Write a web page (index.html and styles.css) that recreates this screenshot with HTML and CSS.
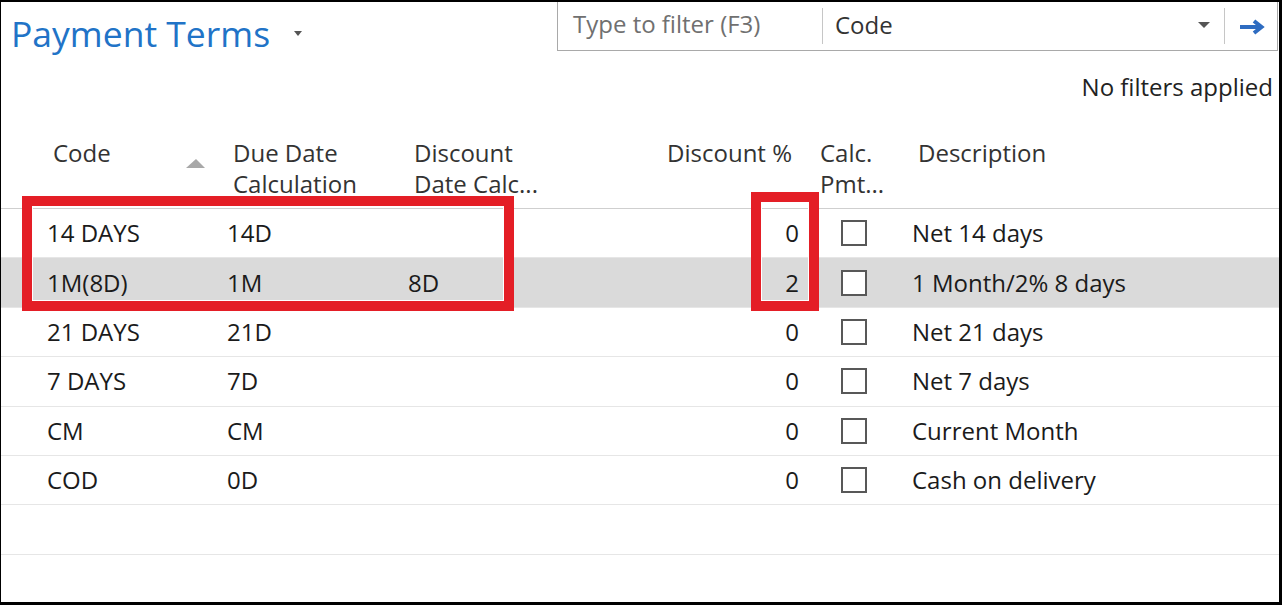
FILE: index.html
```html
<!DOCTYPE html>
<html lang="en">
<head>
    <meta charset="UTF-8">
    <meta name="viewport" content="width=device-width, initial-scale=1.0">
    <title>Payment Terms</title>
    <link rel="stylesheet" href="styles.css">
</head>
<body>
<div class="frame">
    <!-- Top bar -->
    <div class="topbar">
        <div class="page-title">Payment Terms <span class="title-caret"></span></div>
        <div class="filter-box">
            <div class="filter-input">Type to filter (F3)</div>
            <div class="filter-sep"></div>
            <div class="filter-field">Code <span class="field-caret"></span></div>
            <div class="filter-sep"></div>
            <div class="filter-go">
                <svg width="26" height="16" viewBox="0 0 26 16">
                    <path d="M1 8H22" stroke="#2e6cc1" stroke-width="4" fill="none"/>
                    <path d="M15 2L22.5 8L15 14" stroke="#2e6cc1" stroke-width="4" fill="none"/>
                </svg>
            </div>
        </div>
    </div>
    <div class="filter-status">No filters applied</div>

    <!-- List -->
    <div class="list">
        <div class="grid-row list-head">
            <div class="head-code">Code <span class="sort-up"></span></div>
            <div>Due Date<br>Calculation</div>
            <div>Discount<br>Date Calc...</div>
            <div class="num">Discount %</div>
            <div class="calc">Calc.<br>Pmt...</div>
            <div>Description</div>
        </div>

        <div class="grid-row list-row">
            <div>14 DAYS</div><div>14D</div><div></div><div class="num">0</div>
            <div><span class="check"></span></div><div>Net 14 days</div>
        </div>
        <div class="grid-row list-row selected">
            <div>1M(8D)</div><div>1M</div><div>8D</div><div class="num">2</div>
            <div><span class="check"></span></div><div>1 Month/2% 8 days</div>
        </div>
        <div class="grid-row list-row">
            <div>21 DAYS</div><div>21D</div><div></div><div class="num">0</div>
            <div><span class="check"></span></div><div>Net 21 days</div>
        </div>
        <div class="grid-row list-row">
            <div>7 DAYS</div><div>7D</div><div></div><div class="num">0</div>
            <div><span class="check"></span></div><div>Net 7 days</div>
        </div>
        <div class="grid-row list-row">
            <div>CM</div><div>CM</div><div></div><div class="num">0</div>
            <div><span class="check"></span></div><div>Current Month</div>
        </div>
        <div class="grid-row list-row">
            <div>COD</div><div>0D</div><div></div><div class="num">0</div>
            <div><span class="check"></span></div><div>Cash on delivery</div>
        </div>
        <div class="grid-row list-row"></div>
    </div>

    <!-- 강조 표시 -->
    <div class="mark mark-code"></div>
    <div class="mark mark-discount"></div>
</div>
</body>
</html>
```

FILE: styles.css
```css
* {
    box-sizing: border-box;
    margin: 0;
    padding: 0;
}
body {
    font-family: "Open Sans", "Noto Sans", sans-serif;
    background-color: #ffffff;
    color: #1b1b1b;
}
.frame {
    position: relative;
    width: 1282px;
    height: 605px;
    border-style: solid;
    border-color: #000000;
    border-width: 2px 3px 3px 1px;
    background-color: #ffffff;
    overflow: hidden;
}

/* Top bar */
.topbar {
    display: flex;
    height: 49px;
}
.page-title {
    display: flex;
    align-items: center;
    height: 48px;
    margin: 7px 0 0 10px;
    font-size: 35.5px;
    line-height: 48px;
    color: #2173c7;
}
.title-caret {
    width: 0;
    height: 0;
    margin-left: 24px;
    border-left: 4px solid transparent;
    border-right: 4px solid transparent;
    border-top: 5px solid #555555;
}

/* Filter box */
.filter-box {
    display: flex;
    width: 721px;
    height: 49px;
    margin-left: auto;
    margin-right: 1px;
    border: 1px solid #a9a9a9;
    border-top: none;
    font-size: 24px;
    line-height: 44px;
}
.filter-input {
    width: 264px;
    padding-left: 15px;
    color: #707070;
}
.filter-sep {
    width: 1px;
    height: 36px;
    margin-top: 6px;
    background-color: #c6c6c6;
}
.filter-field {
    flex: 1;
    display: flex;
    align-items: center;
    height: 46px;
    padding: 0 14px 0 12px;
    color: #333333;
}
.field-caret {
    width: 0;
    height: 0;
    margin-left: auto;
    margin-top: 0;
    border-left: 6px solid transparent;
    border-right: 6px solid transparent;
    border-top: 6px solid #555555;
}
.filter-go {
    display: flex;
    align-items: center;
    justify-content: center;
    width: 52px;
    height: 42px;
}
.filter-go svg {
    margin-top: 7px;
    margin-left: 2px;
}
.filter-status {
    margin-top: 20px;
    padding-right: 6px;
    text-align: right;
    font-size: 24px;
    line-height: 32px;
    color: #222222;
}

/* List */
.list {
    margin-top: 34px;
}
.grid-row {
    display: grid;
    grid-template-columns: 180px 181px 192px 199px 113px 1fr;
    padding-left: 46px;
    font-size: 24px;
}
.list-head {
    padding-bottom: 9px;
    border-bottom: 1px solid #cfcfcf;
    line-height: 31px;
    color: #333333;
}
.list-head > div {
    padding-left: 6px;
}
.list-head .num {
    padding-left: 0;
    padding-right: 7px;
}
.list-head .calc {
    padding-left: 21px;
}
.head-code {
    display: flex;
    align-items: flex-start;
}
.sort-up {
    width: 0;
    height: 0;
    margin-left: auto;
    margin-right: 22px;
    margin-top: 22px;
    border-left: 10px solid transparent;
    border-right: 9px solid transparent;
    border-bottom: 9px solid #a8a8a8;
}
.num {
    text-align: right;
}
.list-row {
    height: 49.4px;
    align-items: center;
    border-bottom: 1px solid #e6e6e6;
    line-height: 32px;
}
.list-row.selected {
    background-color: #dadada;
}
.check {
    display: block;
    width: 26px;
    height: 26px;
    margin-left: 42px;
    border: 2px solid #585858;
    background-color: #ffffff;
}

/* 강조 박스 */
.mark {
    position: absolute;
    border: 10px solid #e41e26;
    box-shadow: inset 0 0 0 1px #ffffff;
}
.mark-code {
    left: 21px;
    top: 194px;
    width: 492px;
    height: 115px;
}
.mark-discount {
    left: 750px;
    top: 190px;
    width: 68px;
    height: 119px;
}
```
